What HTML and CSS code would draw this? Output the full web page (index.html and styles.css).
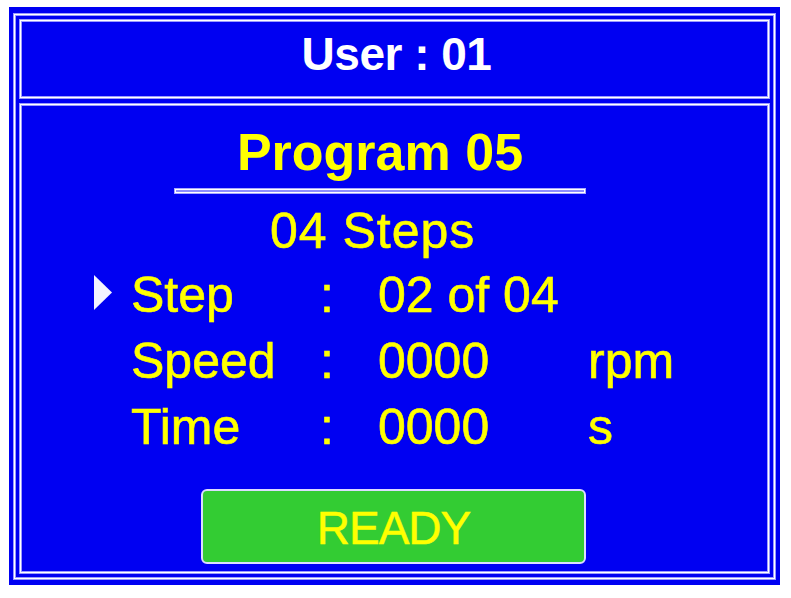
FILE: index.html
```html
<!DOCTYPE html>
<html>
<head>
<meta charset="utf-8">
<link rel="stylesheet" href="styles.css">
</head>
<body>
<div class="screen">
  <div class="frame">
    <div class="header">User : 01</div>
    <div class="content">
      <div class="title-block">
        <div class="program">Program 05</div>
        <div class="separator"></div>
        <div class="steps">04 Steps</div>
      </div>
      <div class="rows">
        <div class="marker"><svg width="18" height="35" viewBox="0 0 18 35"><polygon points="0,0 18,17.5 0,35" fill="#f4f4ff"/></svg></div>
        <div class="label">Step</div>
        <div class="colon">:</div>
        <div class="value">02 of 04</div>
        <div class="unit"></div>

        <div class="marker"></div>
        <div class="label">Speed</div>
        <div class="colon">:</div>
        <div class="value">0000</div>
        <div class="unit">rpm</div>

        <div class="marker"></div>
        <div class="label">Time</div>
        <div class="colon">:</div>
        <div class="value">0000</div>
        <div class="unit">s</div>
      </div>
      <div class="status">READY</div>
    </div>
  </div>
</div>
</body>
</html>
```

FILE: styles.css
```css
html, body {
  margin: 0;
  padding: 0;
  background: #ffffff;
}

body {
  font-family: "Liberation Sans", Arial, sans-serif;
}

.screen {
  margin: 7px 0 0 9px;
  width: 771px;
  height: 578px;
  box-sizing: border-box;
  padding: 6px 4px 5px 4px;
  background: #0000f2;
}

.frame {
  box-sizing: border-box;
  border: 1px solid #ffffff;
  box-shadow: 0 0 0 1px #9a9aff, inset 0 0 0 1px #9a9aff;
  margin: 1px;
  height: calc(100% - 2px);
  padding: 4px;
  display: flex;
  flex-direction: column;
  gap: 4px;
}

.header,
.content {
  box-sizing: border-box;
  border: 1px solid #ffffff;
  box-shadow: 0 0 0 1px #9a9aff, inset 0 0 0 1px #9a9aff;
  margin: 1px;
}

.header {
  height: 78px;
  flex: none;
  color: #ffffff;
  font-weight: bold;
  font-size: 46px;
  line-height: 64px;
  text-align: center;
  padding-left: 4px;
  padding-top: 1px;
  letter-spacing: -0.5px;
}

.content {
  flex: 1;
  padding-top: 17px;
  color: #ffff00;
}

.title-block {
  width: 410px;
  margin-left: 154px;
}

.program {
  font-weight: bold;
  font-size: 52px;
  line-height: 60px;
  text-align: center;
}

.separator {
  margin-top: 7px;
  height: 2px;
  background: #8c8cff;
  border: 1px solid #ffffff;
  box-shadow: 0 0 0 1px #a8a8ff;
}

.steps {
  margin-top: 8px;
  font-size: 50px;
  line-height: 60px;
  letter-spacing: 1px;
  padding-left: 95px;
  -webkit-text-stroke: 0.6px #ffff00;
}

.rows {
  margin-top: 1px;
  padding-left: 73px;
  display: grid;
  grid-template-columns: 18px 208px 58px 210px auto;
  font-size: 50px;
  line-height: 66px;
  -webkit-text-stroke: 0.6px #ffff00;
}

.marker {
  width: 18px;
  padding-top: 13px;
  line-height: 0;
}

.label {
  margin-left: 19px;
}

.status {
  margin: 29px 0 0 180px;
  width: 385px;
  height: 75px;
  box-sizing: border-box;
  border: 2px solid #dcdcff;
  border-radius: 6px;
  background: #33cc33;
  color: #ffff00;
  font-size: 46px;
  line-height: 68px;
  padding-top: 3px;
  text-align: center;
  letter-spacing: -1px;
  -webkit-text-stroke: 0.5px #ffff00;
}
```
